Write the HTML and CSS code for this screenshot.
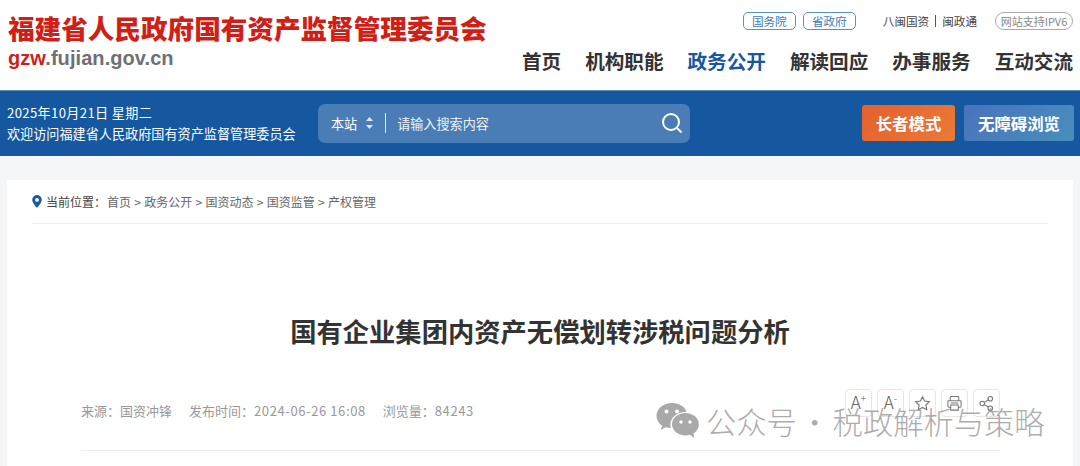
FILE: index.html
```html
<!DOCTYPE html>
<html lang="zh-CN">
<head>
    <meta charset="UTF-8">
    <title>国有企业集团内资产无偿划转涉税问题分析</title>
    <link rel="stylesheet" href="styles.css">
</head>
<body>
    <header class="top">
        <div class="logo">
            <div class="logo-name">福建省人民政府国有资产监督管理委员会</div>
            <div class="logo-url"><span class="red">gzw</span>.fujian.gov.cn</div>
        </div>
        <div class="top-right">
            <div class="links">
                <a class="pill">国务院</a>
                <a class="pill">省政府</a>
                <span class="plain">八闽国资<i class="bar"></i>闽政通</span>
                <a class="ipv6">网站支持IPV6</a>
            </div>
            <nav class="nav">
                <a>首页</a>
                <a>机构职能</a>
                <a class="on">政务公开</a>
                <a>解读回应</a>
                <a>办事服务</a>
                <a>互动交流</a>
            </nav>
        </div>
    </header>

    <section class="band">
        <div class="date">
            <div class="today">2025年10月21日 星期二</div>
            <div>欢迎访问福建省人民政府国有资产监督管理委员会</div>
        </div>
        <div class="search">
            <span class="scope">本站</span>
            <svg class="updown" width="9" height="14" viewBox="0 0 9 14"><path d="M4.5 1 8 5H1zM4.5 13 1 9h7z" fill="#dfe8f3"/></svg>
            <i class="sep"></i>
            <span class="hint">请输入搜索内容</span>
            <svg class="glass" width="24" height="24" viewBox="0 0 24 24" fill="none" stroke="#fff" stroke-width="2"><circle cx="11" cy="11" r="8"/><path d="M17 17l4.500 4.500"/></svg>
        </div>
        <div class="modes">
            <a class="mode elder">长者模式</a>
            <a class="mode access">无障碍浏览</a>
        </div>
    </section>

    <main class="card">
        <div class="crumbs">
            <svg width="10" height="13" viewBox="0 0 10 13"><path fill-rule="evenodd" d="M5 0a4.800 4.800 0 0 1 4.800 4.800C9.800 8 5 13 5 13S.2 8 .2 4.800A4.800 4.800 0 0 1 5 0zm0 3a1.900 1.900 0 1 0 0 3.800A1.900 1.900 0 0 0 5 3z" fill="#1a5ba3"/></svg>
            <span class="here">当前位置：</span>
            <span class="path">首页 &gt; 政务公开 &gt; 国资动态 &gt; 国资监管 &gt; 产权管理</span>
        </div>
        <h1>国有企业集团内资产无偿划转涉税问题分析</h1>
        <div class="meta">
            <div class="info">
                <span>来源：国资冲锋</span>
                <span>发布时间：<span class="num">2024-06-26 16:08</span></span>
                <span>浏览量：<span class="num">84243</span></span>
            </div>
            <div class="tools">
                <a class="tool size">A<sup>+</sup></a>
                <a class="tool size">A<sup>-</sup></a>
                <a class="tool"><svg width="17" height="17" viewBox="0 0 18 18" fill="none" stroke="#777" stroke-width="1.200"><path d="M9 1.800l2.200 4.600 5 .7-3.600 3.500.9 5L9 13.200l-4.500 2.400.9-5L1.800 7.100l5-.7z"/></svg></a>
                <a class="tool"><svg width="17" height="17" viewBox="0 0 18 18" fill="none" stroke="#777" stroke-width="1.100"><path d="M4.500 6V2.500a1 1 0 0 1 1-1h7a1 1 0 0 1 1 1V6M4.500 13H3a1 1 0 0 1-1-1V7a1 1 0 0 1 1-1h12a1 1 0 0 1 1 1v5a1 1 0 0 1-1 1h-1.500M5 10.500h8V16H5zM5 8.500h8"/></svg></a>
                <a class="tool"><svg width="17" height="17" viewBox="0 0 18 18" fill="none" stroke="#777" stroke-width="1.200"><circle cx="13" cy="4" r="2.400"/><circle cx="4.500" cy="9" r="2.400"/><circle cx="13" cy="14" r="2.400"/><path d="M6.600 7.800l4.300-2.600M6.600 10.200l4.300 2.600"/></svg></a>
            </div>
        </div>
    </main>

    <div class="mark">
        <svg width="43" height="36" viewBox="0 0 43 36"><path d="M16 0C7.500 0 .5 5.600.5 12.800c0 4 2.200 7.500 5.700 9.900L4.500 27l5.400-2.800c1.700.5 3.400.8 5 .9-.3-1.200-.5-2.200-.5-3.300 0-7.200 6.700-12.800 15-12.800h1.100C29 3.600 23 0 16 0z" fill="#a9a9a9"/><path d="M29.500 10C22 10 16 15 16 21.200s6 11.200 13.500 11.200c1.500 0 3-.2 4.300-.6l4.700 3.200-1.100-4.600c3.400-2 5.500-5.300 5.500-9.200C42.900 15 37 10 29.500 10z" fill="#a9a9a9"/><circle cx="10.500" cy="8.500" r="2" fill="#fff"/><circle cx="21" cy="8.500" r="2" fill="#fff"/><circle cx="25" cy="19" r="1.700" fill="#fff"/><circle cx="34" cy="19" r="1.700" fill="#fff"/></svg>
        <span>公众号 · 税政解析与策略</span>
    </div>
</body>
</html>
```

FILE: styles.css
```css
body {
    margin: 0;
    height: 466px;
    overflow: hidden;
    background: #f5f6f7;
    font-family: "Noto Sans CJK SC", "Noto Sans", sans-serif;
    color: #333;
}

/* top header */
.top {
    height: 90px;
    background: #fff;
    display: flex;
    justify-content: space-between;
    padding: 0 7px 0 8px;
    box-sizing: border-box;
}

.logo-name {
    margin-top: 9px;
    font-size: 26.600px;
    line-height: 38px;
    font-weight: 900;
    color: #d01f17;
    white-space: nowrap;
}

.logo-url {
    font-family: "Liberation Sans", sans-serif;
    font-size: 20px;
    line-height: 22px;
    font-weight: bold;
    letter-spacing: 0.07px;
    color: #6e7072;
}

.red {
    color: #d01f17;
}

.top-right {
    display: flex;
    flex-direction: column;
    align-items: flex-end;
}

.links {
    display: flex;
    align-items: center;
    height: 18px;
    margin-top: 12px;
    font-size: 11.600px;
}

.pill {
    width: 51px;
    height: 16px;
    margin-right: 7px;
    border: 1px solid #5a92c8;
    border-radius: 5px;
    color: #3b7dbd;
    text-align: center;
    line-height: 16px;
}

.plain {
    margin-left: 20px;
    color: #444;
    display: flex;
    align-items: center;
}

.bar {
    width: 1px;
    height: 12px;
    margin: 0 6px;
    background: #555;
}

.ipv6 {
    margin-left: 18px;
    width: 76px;
    height: 16px;
    border: 1px solid #aaa;
    border-radius: 9px;
    color: #888;
    font-size: 11px;
    line-height: 16px;
    text-align: center;
}

.nav {
    display: flex;
    gap: 24px;
    margin-top: 17px;
    font-size: 19.600px;
    line-height: 28px;
    font-weight: 700;
    color: #333;
}

.nav .on {
    color: #17589f;
}

/* blue band */
.band {
    height: 65px;
    border-top: 1px solid #5c8dbf;
    background: #15589f;
    display: flex;
    align-items: center;
    padding: 0 6px 0 7px;
    color: #fff;
}

.date {
    width: 311px;
    margin-top: -2px;
    font-size: 13.140px;
    line-height: 21px;
    white-space: nowrap;
}

.today {
    letter-spacing: 0.35px;
}

.search {
    width: 372px;
    height: 39px;
    margin-top: -1px;
    border-radius: 7px;
    background: #4a7db6;
    display: flex;
    align-items: center;
    font-size: 13.100px;
}

.scope {
    margin-left: 13px;
}

.updown {
    margin-left: 8px;
}

.sep {
    width: 1px;
    height: 20px;
    margin: 0 11px 0 11px;
    background: #dfe8f3;
}

.hint {
    flex: 1;
    color: #eef3f9;
}

.glass {
    margin-right: 6px;
}

.modes {
    margin-left: auto;
    margin-top: -2px;
    display: flex;
    gap: 9px;
}

.mode {
    height: 36px;
    border-radius: 3px;
    text-align: center;
    font-size: 16.400px;
    line-height: 36px;
    font-weight: 700;
}

.elder {
    width: 93px;
    background: linear-gradient(135deg, #e5602d, #ea7a37);
}

.access {
    width: 110px;
    background: linear-gradient(135deg, #4a72be, #478fbb);
}

/* article card */
.card {
    margin: 24px 7px 0;
    height: 300px;
    background: #fff;
    padding: 0 25px;
}

.crumbs {
    height: 43px;
    border-bottom: 1px solid #eeeeee;
    display: flex;
    align-items: center;
    font-size: 12px;
    color: #666;
}

.here {
    margin-left: 4px;
    width: 61px;
    color: #444;
}

.path {
    word-spacing: 0.6px;
}

h1 {
    margin: 89px 0 0;
    font-size: 26.300px;
    line-height: 36px;
    font-weight: 700;
    text-align: center;
    color: #333;
}

.meta {
    margin: 40px 48px 0 49px;
    height: 62px;
    border-bottom: 1px solid #eeeeee;
    display: flex;
    justify-content: space-between;
    font-size: 13px;
    color: #999;
    box-sizing: border-box;
}

.info {
    display: flex;
    gap: 17px;
    padding-top: 12px;
    line-height: 20px;
}

.num {
    letter-spacing: 0.6px;
}

.tools {
    display: flex;
    gap: 5px;
}

.tool {
    width: 25px;
    height: 26px;
    border: 1px solid #e6e6e6;
    border-radius: 4px;
    display: flex;
    align-items: center;
    justify-content: center;
    color: #555;
}

.size {
    font-size: 17px;
    font-weight: 300;
    line-height: 20px;
    padding-bottom: 3px;
    box-sizing: content-box;
    height: 23px;
}

.tool sup {
    font-size: 10px;
    line-height: 10px;
    align-self: flex-start;
    margin-top: 3px;
}

/* article watermark laid over the page */
.mark {
    position: absolute;
    left: 656px;
    top: 403px;
    display: flex;
    align-items: center;
    gap: 7px;
    font-size: 30.300px;
    font-weight: 300;
    line-height: 36px;
    word-spacing: -4px;
    color: rgba(150, 150, 150, 0.8);
    white-space: nowrap;
}
```
